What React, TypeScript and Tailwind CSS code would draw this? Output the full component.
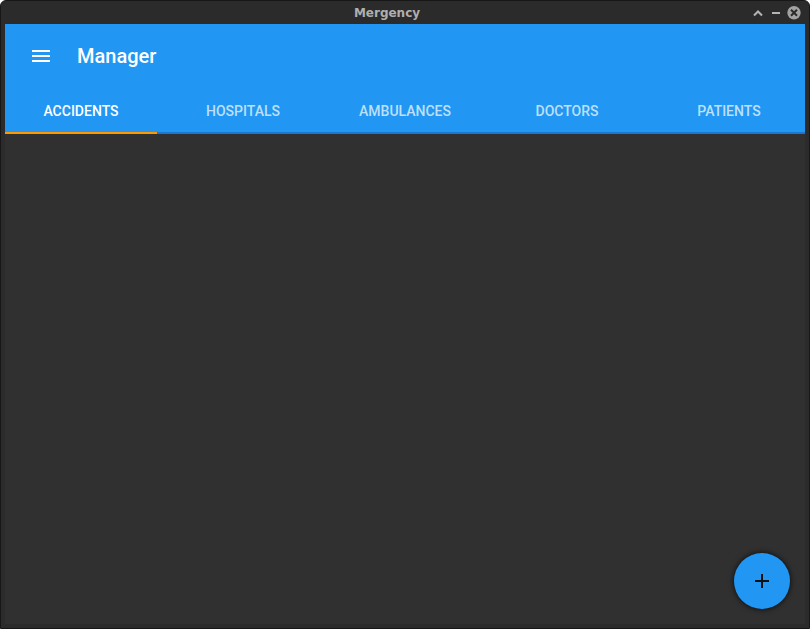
import { useState } from "react";

const tabs = ["Accidents", "Hospitals", "Ambulances", "Doctors", "Patients"];

function TitleBar() {
  return (
    <header className="flex h-[23px] shrink-0 items-center">
      <div className="w-[22px]" />
      <h1 className="flex-1 text-center font-['DejaVu_Sans',sans-serif] text-xs font-bold text-[#afafaf]">
        Mergency
      </h1>
      <div className="flex items-center gap-1 pr-2 text-[#b4b4b4]">
        <button type="button" aria-label="Maximize" className="size-[14px]">
          <svg viewBox="0 0 14 14" className="size-[14px]" fill="none" stroke="currentColor" strokeWidth="2">
            <path d="M3 9.5 7 5.5 11 9.5" />
          </svg>
        </button>
        <button type="button" aria-label="Minimize" className="size-[14px]">
          <svg viewBox="0 0 14 14" className="size-[14px]" fill="currentColor">
            <path d="M3 6h8v2H3z" />
          </svg>
        </button>
        <button type="button" aria-label="Close" className="size-[14px]">
          <svg viewBox="0 0 14 14" className="size-[14px]">
            <circle cx="7" cy="6.8" r="6.7" fill="#a2a2a2" />
            <path d="m4 3.8 6 6m0-6-6 6" fill="none" stroke="#2b2b2b" strokeWidth="2" />
          </svg>
        </button>
      </div>
    </header>
  );
}

export default function App() {
  const [active, setActive] = useState("Accidents");

  return (
    <div className="h-screen bg-white font-[Roboto,sans-serif]">
      <div className="flex h-full flex-col overflow-hidden rounded-t-md border border-[#171717] bg-[#2b2b2b]">
        <TitleBar />
        <div className="mx-1 mb-1 flex flex-1 flex-col bg-[#303030]">
          <div className="bg-[#2196f3]">
            <div className="flex h-16 items-center gap-6 px-6">
              <button type="button" aria-label="Open menu" className="size-6 text-white">
                <svg viewBox="0 0 24 24" className="size-6" fill="currentColor">
                  <path d="M3 18h18v-2H3v2zm0-5h18v-2H3v2zm0-7v2h18V6H3z" />
                </svg>
              </button>
              <h2 className="text-xl font-medium text-white">Manager</h2>
            </div>
            <nav role="tablist" className="flex h-[46px] gap-[10px] bg-[linear-gradient(#1976d2,#1976d2)] bg-[length:100%_2px] bg-bottom bg-no-repeat">
              {tabs.map((tab) => (
                <button
                  key={tab}
                  type="button"
                  role="tab"
                  aria-selected={tab === active}
                  onClick={() => setActive(tab)}
                  className={
                    tab === active
                      ? "flex-1 basis-0 border-b-2 border-[#ff9800] pt-0.5 text-sm font-medium text-white uppercase"
                      : "flex-1 basis-0 border-b-2 border-transparent pt-0.5 text-sm font-medium text-[#bce0fb] uppercase"
                  }
                >
                  {tab}
                </button>
              ))}
            </nav>
          </div>
          <main className="flex flex-1 items-end justify-end p-[15px]">
            <button
              type="button"
              aria-label="Add accident"
              className="flex size-14 items-center justify-center rounded-full bg-[#2196f3] text-[#101010] shadow-[0_0_5px_1px_rgba(0,0,0,0.6)]"
            >
              <svg viewBox="0 0 24 24" className="size-6" fill="currentColor">
                <path d="M19 13h-6v6h-2v-6H5v-2h6V5h2v6h6v2z" />
              </svg>
            </button>
          </main>
        </div>
      </div>
    </div>
  );
}
